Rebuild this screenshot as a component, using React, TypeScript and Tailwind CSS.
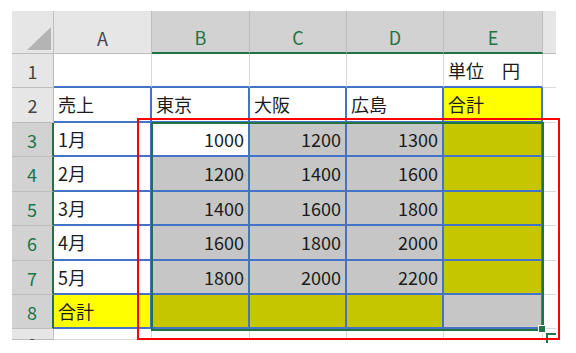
import React from "react";

type Cell = { text?: string; right?: boolean; bg?: "white" | "gray" | "olive" | "yellow" };

const font = { fontFamily: '"Noto Sans CJK JP", "Noto Sans", sans-serif' };

// column widths A..E, then the sliver of F
const colW = ["w-[98px]", "w-[98px]", "w-[97px]", "w-[97px]", "w-[99px]"];
const colLabels = ["A", "B", "C", "D", "E"];
const rowH = ["h-[34px]", "h-[35px]", "h-[34px]", "h-[35px]", "h-[34px]", "h-[35px]", "h-[34px]", "h-[34px]", "h-[11px]"];

const bgClass: Record<string, string> = {
  white: "bg-white",
  gray: "bg-[#c6c6c6]",
  olive: "bg-[#c6c600]",
  yellow: "bg-[#ffff00]",
};

const rows: Cell[][] = [
  [{}, {}, {}, {}, { text: "単位　円" }],
  [{ text: "売上" }, { text: "東京" }, { text: "大阪" }, { text: "広島" }, { text: "合計", bg: "yellow" }],
  [{ text: "1月" }, { text: "1000", right: true }, { text: "1200", right: true, bg: "gray" }, { text: "1300", right: true, bg: "gray" }, { bg: "olive" }],
  [{ text: "2月" }, { text: "1200", right: true, bg: "gray" }, { text: "1400", right: true, bg: "gray" }, { text: "1600", right: true, bg: "gray" }, { bg: "olive" }],
  [{ text: "3月" }, { text: "1400", right: true, bg: "gray" }, { text: "1600", right: true, bg: "gray" }, { text: "1800", right: true, bg: "gray" }, { bg: "olive" }],
  [{ text: "4月" }, { text: "1600", right: true, bg: "gray" }, { text: "1800", right: true, bg: "gray" }, { text: "2000", right: true, bg: "gray" }, { bg: "olive" }],
  [{ text: "5月" }, { text: "1800", right: true, bg: "gray" }, { text: "2000", right: true, bg: "gray" }, { text: "2200", right: true, bg: "gray" }, { bg: "olive" }],
  [{ text: "合計", bg: "yellow" }, { bg: "olive" }, { bg: "olive" }, { bg: "olive" }, { bg: "gray" }],
  [{}, {}, {}, {}, {}],
];

const App: React.FC = () => {
  return (
    <div className="w-[576px] h-[353px] bg-white overflow-hidden pt-[11px] pl-[12px] text-[18px] text-[#1b1b1b]" style={font}>
      <div className="relative w-[544px]">
        {/* column header */}
        <div className="flex h-[43px]">
          <div className="w-[42px] bg-[#e6e6e6] border-r border-b border-[#bdbdbd] relative">
            <svg className="absolute left-0 top-0" width="42" height="43" viewBox="0 0 42 43">
              <polygon points="15,39 39,39 39,16" fill="#b4b4b4" />
            </svg>
          </div>
          {colLabels.map((l, i) => (
            <div
              key={l}
              className={`${colW[i]} flex justify-center items-center pt-[12px] border-r border-r-[#bdbdbd] ${
                i === 0 ? "bg-[#e6e6e6] border-b border-b-[#bdbdbd] text-[#444]" : "bg-[#d2d2d2] border-b-2 border-b-[#217346] text-[#217346]"
              }`}
            >
              {l}
            </div>
          ))}
          <div className="w-[13px] bg-[#e6e6e6] border-b border-[#bdbdbd]" />
        </div>

        {/* rows */}
        {rows.map((r, ri) => {
          const n = ri + 1;
          const sel = n >= 3 && n <= 8;
          const inTable = n >= 2 && n <= 8;
          return (
            <div key={n} className={`flex ${rowH[ri]} overflow-hidden`}>
              <div
                className={`w-[42px] flex justify-center border-b border-b-[#bdbdbd] ${
                  sel ? "bg-[#d2d2d2] text-[#217346] border-r-2 border-r-[#217346]" : "bg-[#e6e6e6] text-[#444] border-r border-r-[#bdbdbd]"
                } ${n === 9 ? "items-start pt-[6px]" : "items-center"}`}
              >
                <span className="leading-none">{n}</span>
              </div>
              {r.map((c, ci) => (
                <div
                  key={ci}
                  className={`${colW[ci]} flex items-center px-[4px] ${c.right ? "justify-end" : "justify-start"} ${bgClass[c.bg ?? "white"]} ${
                    inTable ? "border-r-2 border-b-2 border-[#4472c4]" : n === 1 ? "border-r border-r-[#d9d9d9] border-b-2 border-b-[#4472c4]" : "border-r border-b border-[#d9d9d9]"
                  }`}
                >
                  {c.text}
                </div>
              ))}
              <div className="w-[13px] border-b border-[#d9d9d9]" />
            </div>
          );
        })}

        {/* selection B3:E8 */}
        <div className="absolute left-[139px] top-[111px] w-[393px] h-[209px] border-2 border-[#217346]" />
        <div className="absolute left-[526px] top-[314px] w-[8px] h-[8px] bg-[#217346] border border-white" />

        {/* quick analysis corner */}
        <div className="absolute left-[534px] top-[322px] w-[10px] h-[10px] border-l-2 border-t-2 border-[#217346]" />

        {/* red frame */}
        <div className="absolute left-[125px] top-[107px] w-[423px] h-[222px] border-2 border-[#ff0000]" />
      </div>
    </div>
  );
};

export default App;
